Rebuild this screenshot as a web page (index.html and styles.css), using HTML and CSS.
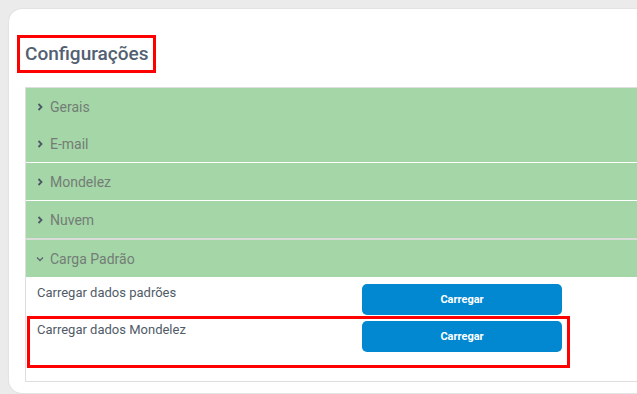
FILE: index.html
```html
<!DOCTYPE html>
<html lang="pt-BR">
<head>
  <meta charset="UTF-8" />
  <meta name="viewport" content="width=device-width, initial-scale=1" />
  <title>Configurações</title>
  <link rel="stylesheet" href="styles.css">
</head>
<body>

<div class="page">
  <div class="card">
    <h2 class="title">Configurações</h2>

    <div class="accordion">
      <div class="acc-head">
        <svg class="chev" width="8" height="8" viewBox="0 0 8 8"><polyline points="2.5,1 5.5,4 2.5,7" /></svg>
        <span>Gerais</span>
      </div>
      <div class="acc-head">
        <svg class="chev" width="8" height="8" viewBox="0 0 8 8"><polyline points="2.5,1 5.5,4 2.5,7" /></svg>
        <span>E-mail</span>
      </div>
      <div class="acc-head sep">
        <svg class="chev" width="8" height="8" viewBox="0 0 8 8"><polyline points="2.5,1 5.5,4 2.5,7" /></svg>
        <span>Mondelez</span>
      </div>
      <div class="acc-head sep">
        <svg class="chev" width="8" height="8" viewBox="0 0 8 8"><polyline points="2.5,1 5.5,4 2.5,7" /></svg>
        <span>Nuvem</span>
      </div>
      <div class="acc-head open">
        <svg class="chev down" width="8" height="8" viewBox="0 0 8 8"><polyline points="1,2.5 4,5.5 7,2.5" /></svg>
        <span>Carga Padrão</span>
      </div>

      <div class="acc-body">
        <div class="load-row">
          <span class="load-label">Carregar dados padrões</span>
          <button class="btn-load">Carregar</button>
        </div>
        <div class="load-row highlight">
          <span class="load-label">Carregar dados Mondelez</span>
          <button class="btn-load">Carregar</button>
        </div>
      </div>
    </div>
  </div>
</div>

</body>
</html>
```

FILE: styles.css
```css
body {
  margin: 0;
  background: #ebebeb;
  font-family: Roboto, "Liberation Sans", sans-serif;
  height: 394px;
  overflow: hidden;
}
.page {
  padding: 9px 0 0 9px;
}
.card {
  background: white;
  border-radius: 13px 0 0 13px;
  box-shadow: 0 0 2px rgba(0,0,0,0.12);
  height: 384px;
  box-sizing: border-box;
  padding: 26px 0 0 8px;
}
.title {
  display: inline-block;
  margin: 0 0 14px;
  padding: 1px 5px;
  border: 3px solid #ff0000;
  font-size: 19px;
  line-height: 30px;
  font-weight: 500;
  color: #526072;
}
.accordion {
  margin-left: 8px;
  border: 1px solid #dedede;
  border-right: none;
}
.acc-head {
  display: flex;
  align-items: center;
  height: 37px;
  padding-left: 10px;
  background: #a5d6a7;
  color: #737d76;
  font-size: 14px;
}
.acc-head.sep {
  border-top: 1px solid #ffffff;
}
.acc-head.open {
  border-top: 2px solid #d9dcd9;
}
.chev {
  margin-right: 6px;
  fill: none;
  stroke: #4d5866;
  stroke-width: 1.8;
}
.chev.down {
  stroke-width: 1.3;
  stroke: #5c6772;
}
.acc-body {
  background: white;
  padding: 7px 0 13px 1px;
}
.load-row {
  display: flex;
  align-items: flex-start;
  width: 543px;
  box-sizing: border-box;
  padding: 0 8px 1px 10px;
}
.load-row.highlight {
  border: 3px solid #ff0000;
  padding: 2px 5px 13px 7px;
}
.load-label {
  flex: 1;
  padding-top: 1px;
  font-size: 13px;
  line-height: 16px;
  color: #4f5b67;
}
.btn-load {
  width: 200px;
  height: 31px;
  background: #0288d1;
  color: white;
  border: none;
  border-radius: 5px;
  font-family: Roboto, "Liberation Sans", sans-serif;
  font-size: 11px;
  font-weight: 700;
  cursor: pointer;
}
```
